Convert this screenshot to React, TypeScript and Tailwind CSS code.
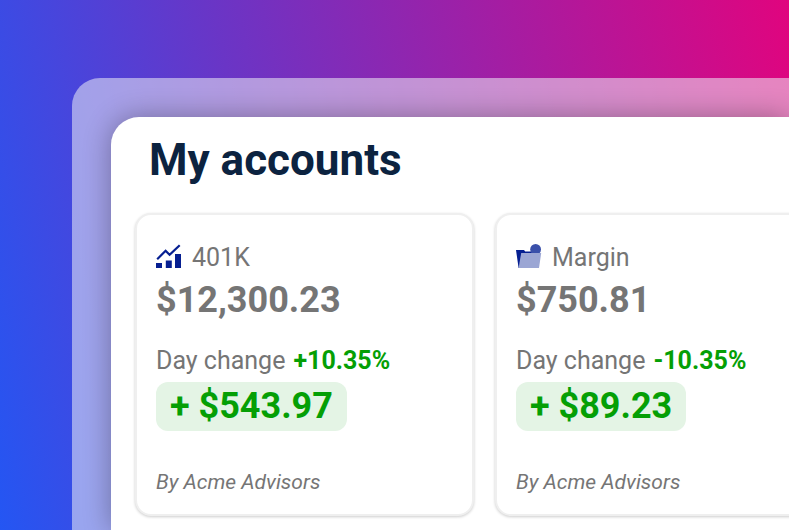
type Account = {
  id: number;
  name: string;
  icon: typeof ChartIcon;
  balance: string;
  percent: string;
  change: string;
  advisor: string;
};

function ChartIcon() {
  return (
    <svg className="h-7 w-[26px] shrink-0" viewBox="0 -1 26 28" fill="none" aria-hidden="true">
      <path d="M0 18h6v5H0zM9.8 15.5h6V23h-6zM19 9h6v14h-6z" fill="#061f91" />
      <path d="M1.2 14.2 9.6 5.8l4 4L23.7.2" stroke="#061f91" strokeWidth="2.2" />
    </svg>
  );
}

function FolderIcon() {
  return (
    <svg className="h-7 w-[26px] shrink-0" viewBox="0 -1 26 28" fill="none" aria-hidden="true">
      <path d="M0 5h8l1.2 1.6H22V9L4 23H2.6z" fill="#061f91" />
      <circle cx="19.6" cy="4.4" r="5.4" fill="#3a50aa" />
      <path d="M5.2 8h20L23 23H2.6z" fill="#9ba6d4" />
    </svg>
  );
}

const accounts: Account[] = [
  {
    id: 1,
    name: "401K",
    icon: ChartIcon,
    balance: "$12,300.23",
    percent: "+10.35%",
    change: "+ $543.97",
    advisor: "By Acme Advisors",
  },
  {
    id: 2,
    name: "Margin",
    icon: FolderIcon,
    balance: "$750.81",
    percent: "-10.35%",
    change: "+ $89.23",
    advisor: "By Acme Advisors",
  },
];

function AccountCard({ account }: { account: Account }) {
  const Icon = account.icon;

  return (
    <article className="w-[339px] shrink-0 rounded-2xl border-2 border-[#efefef] bg-white px-[19px] pt-[25px] pb-4 text-[#757575] shadow-[0_1px_3px_rgba(0,0,0,0.2)]">
      <div className="flex items-center gap-2.5">
        <Icon />
        <h2 className="text-[25px] leading-9">{account.name}</h2>
      </div>
      <p className="text-4xl leading-12 font-bold">{account.balance}</p>

      <p className="mt-[19px] flex items-center gap-2 text-[25px] leading-9">
        Day change
        <span className="font-bold text-[#059f05]">{account.percent}</span>
      </p>
      <p className="mt-[3px] w-fit rounded-xl bg-[#e4f4e5] px-3.5 text-4xl leading-[49px] font-bold text-[#059f05]">
        {account.change}
      </p>

      <p className="mt-[35px] text-[21px] leading-8 italic">{account.advisor}</p>
    </article>
  );
}

export default function App() {
  return (
    <div className="flex min-h-screen flex-col overflow-hidden bg-[linear-gradient(78deg,#2456f3_0%,#6a35c6_36%,#e4037c_102%)] pt-[78px] pl-18 font-['Roboto',sans-serif]">
      {/* Translucent frame */}
      <div className="flex grow flex-col rounded-tl-[28px] bg-[#eef0f5]/54 pt-[39px] pl-[39px]">
        {/* Accounts panel */}
        <main className="grow rounded-tl-[28px] bg-white pt-[15px] pl-6 shadow-[0_0_28px_rgba(0,0,0,0.32)]">
          <h1 className="pl-3.5 text-[44px] leading-14 font-bold text-[#0c2340]">My accounts</h1>
          <div className="mt-[25px] flex gap-[21px] pb-3">
            {accounts.map((account) => (
              <AccountCard key={account.id} account={account} />
            ))}
          </div>
        </main>
      </div>
    </div>
  );
}
